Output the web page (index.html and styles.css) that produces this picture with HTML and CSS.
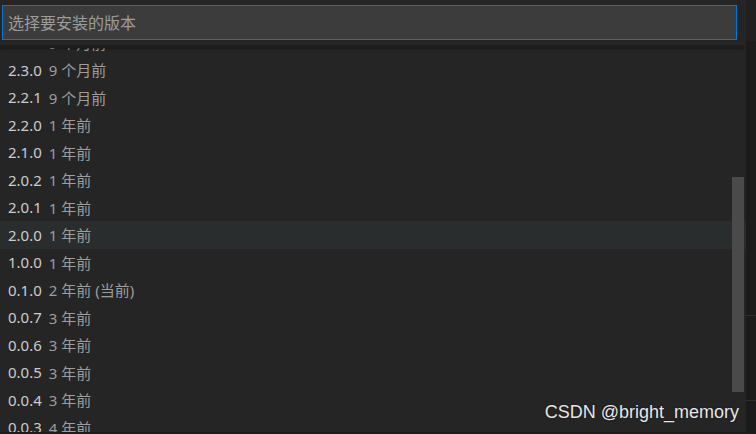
FILE: index.html
```html
<!DOCTYPE html>
<html lang="zh-CN">
<head>
<meta charset="utf-8">
<title>选择要安装的版本</title>
<link rel="stylesheet" href="styles.css">
</head>
<body>
<div class="screen">
  <div class="widget">
    <div class="input-row">
      <div class="input">选择要安装的版本</div>
    </div>
    <div class="list">
      <div class="rows">
        <div class="row"><span class="label">2.4.0</span><span class="desc">9 个月前</span></div>
        <div class="row"><span class="label">2.3.0</span><span class="desc">9 个月前</span></div>
        <div class="row"><span class="label">2.2.1</span><span class="desc">9 个月前</span></div>
        <div class="row"><span class="label">2.2.0</span><span class="desc">1 年前</span></div>
        <div class="row"><span class="label">2.1.0</span><span class="desc">1 年前</span></div>
        <div class="row"><span class="label">2.0.2</span><span class="desc">1 年前</span></div>
        <div class="row"><span class="label">2.0.1</span><span class="desc">1 年前</span></div>
        <div class="row hover"><span class="label">2.0.0</span><span class="desc">1 年前</span></div>
        <div class="row"><span class="label">1.0.0</span><span class="desc">1 年前</span></div>
        <div class="row"><span class="label">0.1.0</span><span class="desc">2 年前 (当前)</span></div>
        <div class="row"><span class="label">0.0.7</span><span class="desc">3 年前</span></div>
        <div class="row"><span class="label">0.0.6</span><span class="desc">3 年前</span></div>
        <div class="row"><span class="label">0.0.5</span><span class="desc">3 年前</span></div>
        <div class="row"><span class="label">0.0.4</span><span class="desc">3 年前</span></div>
        <div class="row"><span class="label">0.0.3</span><span class="desc">4 年前</span></div>
      </div>
      <div class="shadow"></div>
      <div class="scrollbar"></div>
      <div class="watermark">CSDN @bright_memory</div>
    </div>
    <div class="footer"></div>
  </div>
  <div class="side">
    <div class="side-top"></div>
    <div class="side-a"></div>
    <div class="side-b"></div>
    <div class="side-c"></div>
  </div>
</div>
</body>
</html>
```

FILE: styles.css
```css
html, body {
  margin: 0;
  padding: 0;
  background: #1b1b1b;
  overflow: hidden;
}

.screen {
  display: flex;
  width: 756px;
  height: 434px;
  font-family: "Noto Sans", "Noto Sans CJK SC", sans-serif;
}

.widget {
  width: 746px;
  height: 434px;
  background: #252526;
  display: flex;
  flex-direction: column;
}

.input-row {
  padding: 5px 9px 5px 2px;
}

.input {
  height: 33px;
  border: 1px solid #0078d4;
  background: #3c3c3c;
  color: #9c9c9c;
  font-family: "Noto Sans CJK SC", sans-serif;
  font-size: 16px;
  line-height: 33px;
  padding-left: 5px;
}

.list {
  position: relative;
  flex: 1;
  overflow: hidden;
}

.rows {
  margin-top: -16.5px;
}

.row {
  height: 27.5px;
  display: flex;
  align-items: center;
  padding-left: 8px;
  font-size: 15px;
  white-space: nowrap;
}

.row.hover {
  background: #2a2d2e;
}

.label {
  color: #cccccc;
}

.desc {
  color: #9d9d9d;
  margin-left: 7px;
}

.shadow {
  position: absolute;
  left: 0;
  top: 0;
  width: 744px;
  height: 3px;
  background: #1d1d1d;
  box-shadow: 0 1px 2px rgba(0, 0, 0, 0.35);
}

.scrollbar {
  position: absolute;
  left: 732px;
  top: 132px;
  width: 12px;
  height: 215px;
  background: #4a4a4a;
}

.watermark {
  position: absolute;
  right: 7px;
  bottom: 9px;
  font-family: "Liberation Sans", Arial, sans-serif;
  font-size: 18px;
  color: #e6e6e6;
  text-shadow: 0 0 2px rgba(0, 0, 0, 0.6);
}

.footer {
  height: 2px;
  background: #1c1c1c;
}

.side {
  flex: 1;
  display: flex;
  flex-direction: column;
  background: #1b1b1b;
}

.side-top {
  height: 41px;
  background: #202020;
}

.side-a {
  height: 274px;
}

.side-b {
  height: 84px;
  border-top: 1px solid #2e2e2e;
}

.side-c {
  flex: 1;
  border-top: 1px solid #2e2e2e;
}
```
